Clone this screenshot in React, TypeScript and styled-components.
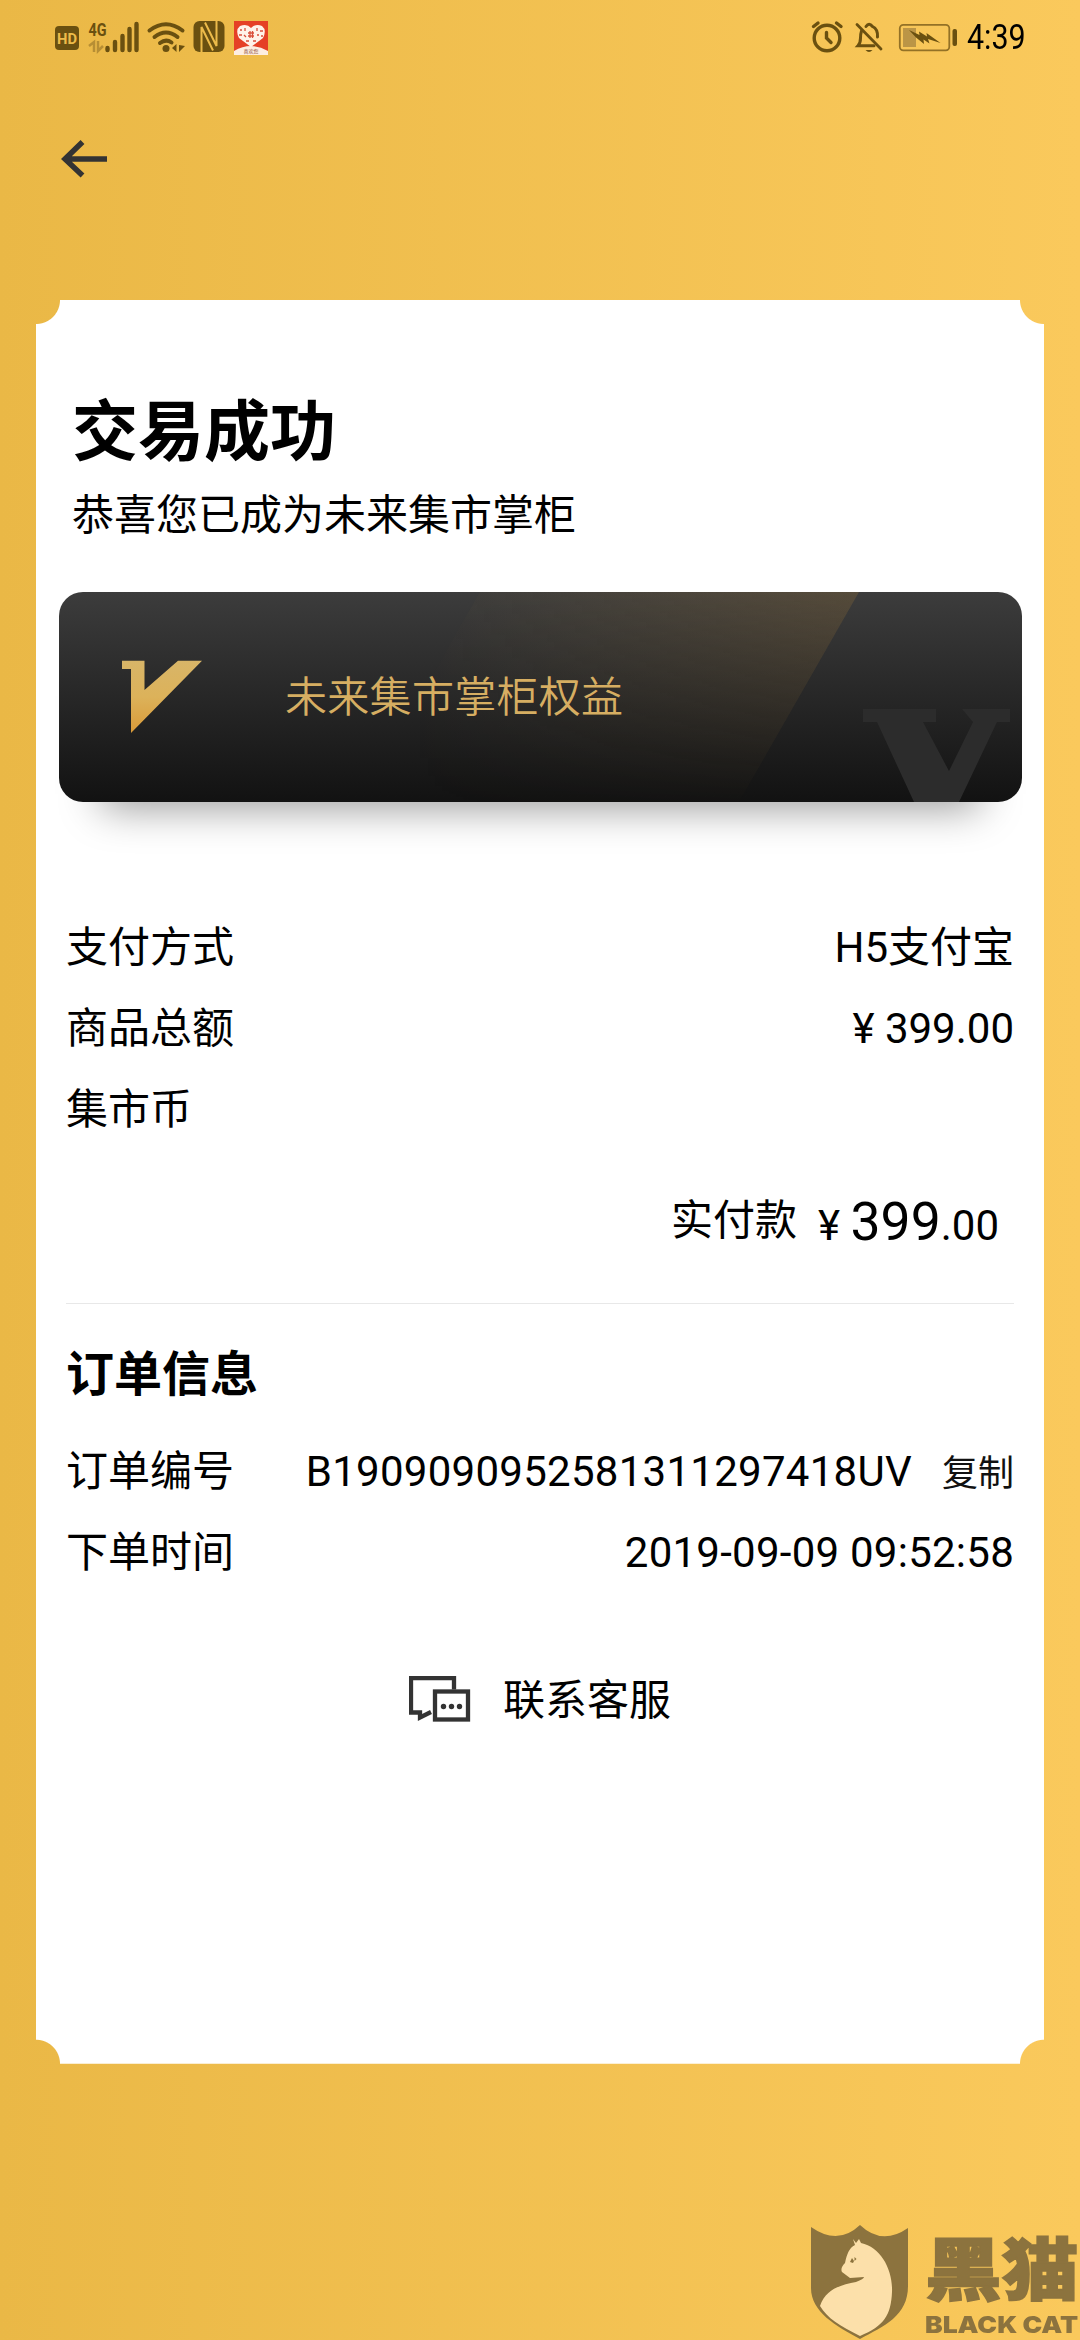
import React from "react";
import styled, { createGlobalStyle } from "styled-components";

const Global = createGlobalStyle`
  body { margin: 0; background: #f2be50; }
  * { box-sizing: border-box; }
`;

const Page = styled.main`
  width: 1080px;
  height: 2340px;
  display: flex;
  flex-direction: column;
  position: relative;
  overflow: hidden;
  background: linear-gradient(90deg, #eab846 0%, #fac95c 100%);
  font-family: Roboto, "Noto Sans CJK SC", sans-serif;
  color: #000;
`;

const StatusBar = styled.header`
  height: 78px;
  padding: 0 55px 0 53px;
  display: flex;
  justify-content: space-between;
  align-items: flex-start;
`;

const Drawing = styled.svg`
  display: block;
  flex: none;
`;

const StatusGroup = styled.div`
  display: flex;
  align-items: flex-start;
`;

const Clock = styled.time`
  width: 58px;
  margin-left: 9px;
  padding-top: 18px;
  font-size: 35px;
  line-height: 40px;
  white-space: nowrap;
  transform: scaleX(0.87);
  transform-origin: left center;
`;

const NavBar = styled.nav`
  height: 222px;
  padding: 60px 0 0 60px;
`;

const BackButton = styled.button`
  display: block;
  padding: 0;
  border: 0;
  background: none;
`;

const Ticket = styled.section`
  width: 1008px;
  height: 1764px;
  margin: 0 36px;
  display: flex;
  flex-direction: column;
  background:
    radial-gradient(circle at 0 0, transparent 23.5px, #fff 24.5px) 0 0 / 50% 50% no-repeat,
    radial-gradient(circle at 100% 0, transparent 23.5px, #fff 24.5px) 100% 0 / 50% 50% no-repeat,
    radial-gradient(circle at 0 100%, transparent 23.5px, #fff 24.5px) 0 100% / 50% 50.1% no-repeat,
    radial-gradient(circle at 100% 100%, transparent 23.5px, #fff 24.5px) 100% 100% / 50% 50.1% no-repeat;
`;

const Title = styled.h1`
  margin: 93px 0 0 36px;
  font-size: 66px;
  line-height: 80px;
  font-weight: 700;
`;

const Subtitle = styled.p`
  margin: 13px 0 0 36px;
  font-size: 42px;
  line-height: 60px;
`;

const Banner = styled.div`
  width: 963px;
  height: 210px;
  margin: 46px 0 0 23px;
  border-radius: 24px;
  position: relative;
  display: flex;
  align-items: center;
  background: linear-gradient(180deg, #3c3c3c 0%, #121212 100%);
  box-shadow: 0 48px 42px -42px rgba(0, 0, 0, 0.4);
`;

const BannerArt = styled(Drawing)`
  position: absolute;
  inset: 0;
  border-radius: 24px;
`;

const BannerLabel = styled.span`
  position: relative;
  margin: 2px 0 0 226px;
  font-size: 42px;
  line-height: 60px;
  letter-spacing: 0.3px;
  font-weight: 350;
  color: #d6ae62;
`;

const Details = styled.div<{ $top: number }>`
  margin: ${(p) => p.$top}px 30px 0;
  display: flex;
  flex-direction: column;
`;

const Row = styled.div`
  height: 81px;
  display: flex;
  justify-content: space-between;
  align-items: center;
  font-size: 42px;
  line-height: 60px;
`;

const Value = styled.span<{ $tracking?: number }>`
  display: flex;
  align-items: baseline;
  white-space: pre;
  letter-spacing: ${(p) => p.$tracking ?? 0}px;
`;

const CopyButton = styled.button`
  padding: 0;
  margin-left: 30px;
  border: 0;
  background: none;
  color: #111;
  font: 36px/50px Roboto, "Noto Sans CJK SC", sans-serif;
`;

const Total = styled.div`
  height: 155px;
  margin-top: -1px;
  padding: 42px 15px 0 0;
  display: flex;
  justify-content: flex-end;
  align-items: flex-start;
  gap: 21px;
  font-size: 42px;
  line-height: 60px;
  border-bottom: 1px solid #e8e8e8;
`;

const Amount = styled.span`
  padding-top: 1px;
  white-space: pre;
`;

const Whole = styled.span`
  font-size: 53.500px;
`;

const SectionTitle = styled.h2`
  margin: 0 0 21px;
  font-size: 48px;
  line-height: 70px;
  font-weight: 700;
`;

const Service = styled.button`
  margin-top: 78px;
  padding: 0 0 0 373px;
  border: 0;
  background: none;
  display: flex;
  align-items: center;
  gap: 32px;
  color: #000;
  font: 42px/60px Roboto, "Noto Sans CJK SC", sans-serif;
`;

const Watermark = styled.aside`
  position: absolute;
  left: 811px;
  top: 2225px;
  width: 269px;
  height: 115px;
  display: flex;
  gap: 17px;
  color: #8c733e;
`;

const Brand = styled.div`
  width: 152px;
  display: flex;
  flex-direction: column;
`;

const BrandName = styled.span`
  height: 88px;
  font: 900 68px/72px "Noto Sans CJK SC", sans-serif;
  -webkit-text-stroke: 1.5px #8c733e;
  white-space: nowrap;
  transform: translateY(5px) scaleX(1.13);
  transform-origin: left top;
`;

const BrandLatin = styled.span`
  width: 170px;
  font: 900 23px/24px Inter, "Open Sans", sans-serif;
  white-space: nowrap;
  transform: scaleX(1.15);
  transform-origin: left center;
`;

const dark = "#6a5010";

const LeftStatus = () => (
  <Drawing width="222" height="78" viewBox="53 0 222 78">
    <rect x="55" y="26" width="24" height="24" rx="4" fill={dark} />
    <text x="57" y="43.5" fontSize="15" fontWeight="700" fontFamily="Roboto" fill="#edbb4a" textLength="20" lengthAdjust="spacingAndGlyphs">HD</text>
    <text x="88.5" y="35.5" fontSize="19" fontWeight="700" fontFamily="Roboto" fill={dark} textLength="18" lengthAdjust="spacingAndGlyphs">4G</text>
    <path d="M89 46l5-4v10M98 41v10l5-5" fill="none" stroke="#b78e34" strokeWidth="2.5" />
    <path d="M107.500 48v2M115 42v8M122.500 36v14M129.500 29v21M136.500 24v26" stroke={dark} strokeWidth="4.4" strokeLinecap="round" />
    <g fill="none" stroke={dark} strokeWidth="4" strokeLinecap="round">
      <path d="M149.500 30.500Q166 18 182.500 30.500M154.500 37Q166 28 177.500 37M160 43Q166 38.500 171.500 42.500" />
    </g>
    <circle cx="166" cy="48.500" r="3.500" fill={dark} />
    <path d="M172 48l4.500-4v8zM179 45v7l6-6z" fill={dark} />
    <rect x="193.500" y="21" width="31" height="31" rx="6" fill={dark} />
    <path d="M201.500 52V27L213 50.500" fill="none" stroke="#edbb4a" strokeWidth="2" />
    <path d="M205 22.500L216.500 46V21" fill="none" stroke="#edbb4a" strokeWidth="2" />
    <rect x="234" y="21" width="34" height="34" fill="#e54026" />
    <path d="M251 47L239 38Q235 30 240 26Q247 23 251 28Q256 23 262 26Q267 30 263 38Z" fill="#fff3ea" />
    <path d="M240 30h2M245 28v3M239 35h3M244 35l2 2M248 33h6M248 36h6M250 31v7M252.500 31v7M257 28v3M260 31h3M257 35h2M261 36h2M246 41h3M253 41h3" stroke="#d94f3b" strokeWidth="1.300" fill="none" />
    <path d="M234 55V51Q251 41 268 51V55Z" fill="#fdeee2" />
    <text x="243.500" y="53" fontSize="5" fontFamily="Noto Sans CJK SC" fill="#8b4a35">喜欢您</text>
  </Drawing>
);

const RightStatus = () => (
  <Drawing width="147" height="78" viewBox="810 0 147 78">
    <g fill="none" stroke={dark} strokeWidth="3.400" strokeLinecap="round">
      <circle cx="826" cy="38" r="12.800" />
      <path d="M825.500 32.500V38l4.500 4.500M812.500 26.500l4.500-3.500M840 26.500l-4.500-3.500" />
      <path d="M856 24.500L880 49" strokeWidth="2.800" />
      <path d="M860.500 31Q859.500 34 859.500 38Q859.500 43 857 45.800H873M865 26.500Q868 22 871.500 26.500Q877 29 876.500 37" strokeWidth="3" />
    </g>
    <path d="M864.500 50h7q-3.500 4-7 0z" fill={dark} />
    <rect x="898.800" y="24.800" width="49.500" height="25.500" rx="3.500" fill="none" stroke="#937126" strokeWidth="1.800" />
    <rect x="902" y="28" width="13" height="19" fill="#bb9546" />
    <path d="M908 30l10.500 5-.5-3.500 8 5-.5-3.500L939.500 43l-12.500-4 1.500 4.500-6-4 .5 4.500-8-6.500z" fill={dark} />
    <rect x="951.500" y="29" width="4.500" height="17" rx="2" fill={dark} />
  </Drawing>
);

const rows: [string, string][] = [
  ["支付方式", "H5支付宝"],
  ["商品总额", "¥ 399.00"],
  ["集市币", ""],
];

export default function App() {
  return (
    <>
      <Global />
      <Page>
        <StatusBar>
          <LeftStatus />
          <StatusGroup>
            <RightStatus />
            <Clock>4:39</Clock>
          </StatusGroup>
        </StatusBar>
        <NavBar>
          <BackButton aria-label="返回">
            <Drawing width="50" height="42" viewBox="60 138 50 42" fill="none" stroke="#333" strokeWidth="5.500">
              <path d="M107 159H65M82.500 142L65 159L82.500 175.500" />
            </Drawing>
          </BackButton>
        </NavBar>
        <Ticket>
          <Title>交易成功</Title>
          <Subtitle>恭喜您已成为未来集市掌柜</Subtitle>
          <Banner>
            <BannerArt width="963" height="210" viewBox="59 592 963 210">
              <defs>
                <linearGradient id="sheen" x1="0" x2="1" y1="0" y2="0">
                  <stop offset="0.100" stopColor="#a48040" stopOpacity="0" />
                  <stop offset="1" stopColor="#a47a38" stopOpacity="0.250" />
                </linearGradient>
                <linearGradient id="fade" x1="0" x2="0" y1="0" y2="1">
                  <stop offset="0" stopColor="#fff" />
                  <stop offset="1" stopColor="#fff" stopOpacity="0.050" />
                </linearGradient>
                <mask id="sheenMask">
                  <rect x="59" y="592" width="963" height="210" fill="url(#fade)" />
                </mask>
                <linearGradient id="gold" x1="0" x2="0" y1="0" y2="1">
                  <stop offset="0" stopColor="#d8b568" />
                  <stop offset="0.500" stopColor="#dcb25a" />
                  <stop offset="1" stopColor="#d99a38" />
                </linearGradient>
              </defs>
              <path d="M480 592H859L739 802H360Z" fill="url(#sheen)" mask="url(#sheenMask)" />
              <path d="M863 709H936V722H923L949 771L973 722L962 709H1010V722H997L959 802H914L877 722H863Z" fill="#2c2c2c" />
              <path d="M122 660.700H144.500V690L178 660.700H202L131 733V669H122Z" fill="url(#gold)" />
            </BannerArt>
            <BannerLabel>未来集市掌柜权益</BannerLabel>
          </Banner>
          <Details $top={105}>
            {rows.map(([label, value]) => (
              <Row key={label}>
                <span>{label}</span>
                <Value>{value}</Value>
              </Row>
            ))}
            <Total>
              <span>实付款</span>
              <Amount>
                ¥ <Whole>399</Whole>.00
              </Amount>
            </Total>
          </Details>
          <Details $top={36}>
            <SectionTitle>订单信息</SectionTitle>
            <Row>
              <span>订单编号</span>
              <Value $tracking={0.27}>
                B1909090952581311297418UV
                <CopyButton>复制</CopyButton>
              </Value>
            </Row>
            <Row>
              <span>下单时间</span>
              <Value $tracking={0.25}>2019-09-09 09:52:58</Value>
            </Row>
          </Details>
          <Service>
            <Drawing width="62" height="50" viewBox="409 1675.500 62 50" fill="none" stroke="#333" strokeWidth="4.300">
              <path d="M454 1689V1677.700H411V1712H420V1717L431 1711.500" />
              <rect x="435" y="1691" width="33" height="28" />
              <g fill="#333" stroke="none">
                <circle cx="443.500" cy="1706" r="2.700" />
                <circle cx="451.500" cy="1706" r="2.700" />
                <circle cx="459.500" cy="1706" r="2.700" />
              </g>
            </Drawing>
            联系客服
          </Service>
        </Ticket>
        <Watermark>
          <Drawing width="97" height="115" viewBox="811 2225 97 115">
            <path d="M811 2227Q838 2246 860 2225Q882 2246 908 2228V2286C908 2316 884 2326 860 2339C836 2326 811 2312 811 2288Z" fill="#8c733e" />
            <path d="M853 2239L856 2243L859 2239L861 2243C881 2247 893 2270 892 2292C891 2315 884 2326 860 2336C840 2326 827 2318 820 2306C826 2288 842 2285 856 2282Q864 2279 864 2277L850 2278Q846 2275 842 2272Q840 2268 845 2263C847 2254 849 2248 855 2245Z" fill="#fce0aa" />
            <path d="M850 2262L852 2258L854 2261L853 2263ZM854.500 2257L856.500 2259L854.500 2261Z" fill="#8c733e" />
          </Drawing>
          <Brand>
            <BrandName>黑猫</BrandName>
            <BrandLatin>BLACK CAT</BrandLatin>
          </Brand>
        </Watermark>
      </Page>
    </>
  );
}
